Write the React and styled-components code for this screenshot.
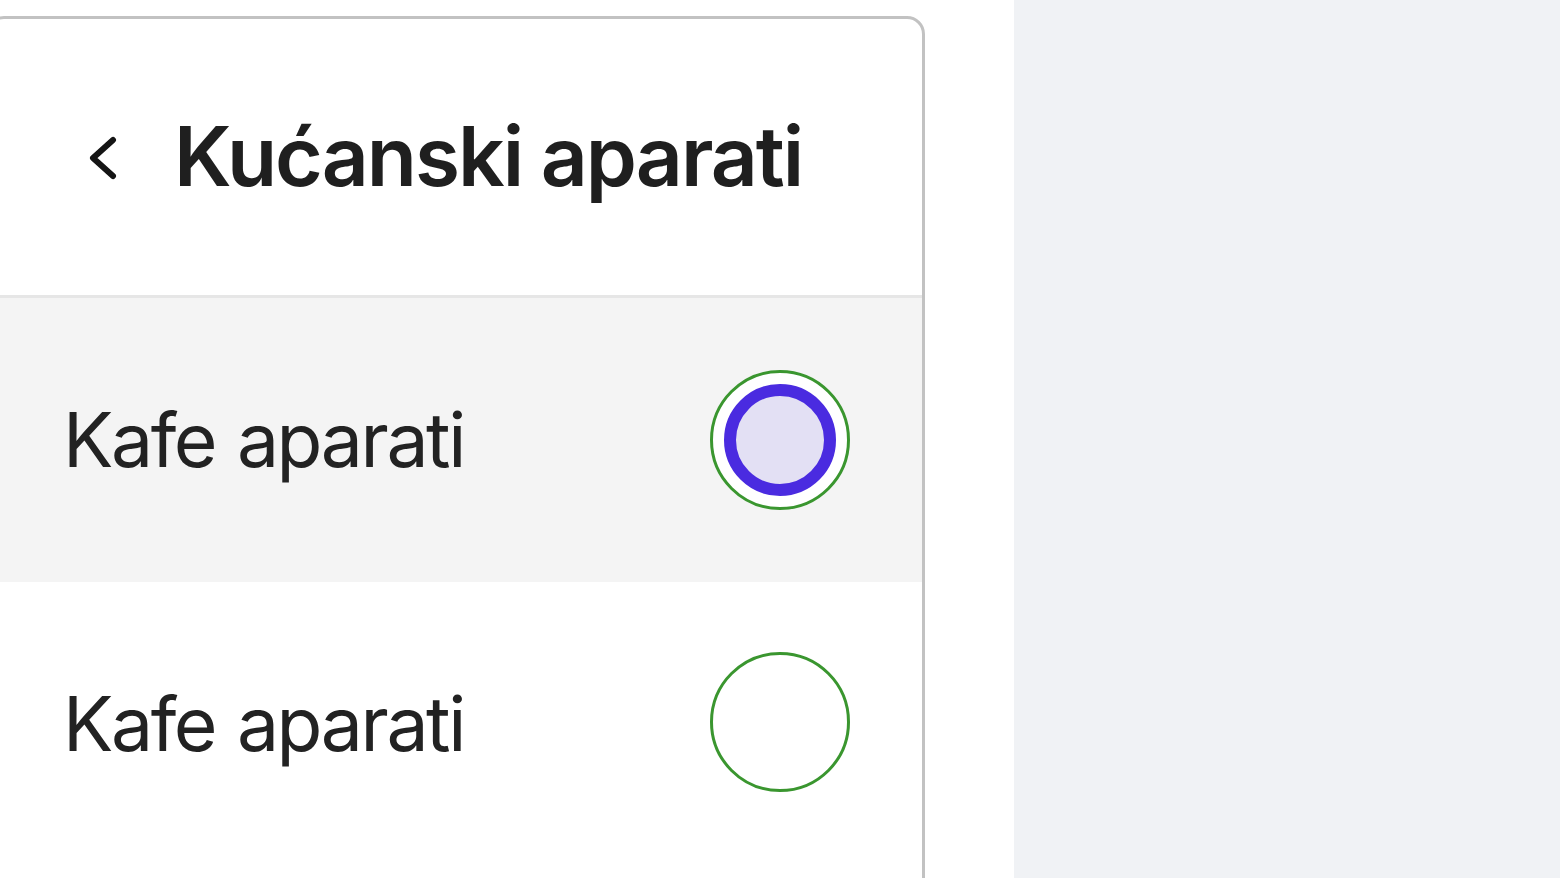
import React from "react";
import styled, { createGlobalStyle } from "styled-components";

const Global = createGlobalStyle`
  html, body { margin: 0; padding: 0; background: #ffffff; }
  body { font-family: Inter, "Noto Sans", "Liberation Sans", sans-serif; }
`;

const Page = styled.div`
  display: flex;
  width: 1560px;
  height: 878px;
  overflow: hidden;
  background: #ffffff;
`;

const LeftColumn = styled.div`
  width: 1014px;
  flex: none;
  padding-top: 16px;
  box-sizing: border-box;
`;

const SidePane = styled.div`
  flex: 1;
  background: #f0f2f5;
`;

const Panel = styled.div`
  margin-left: -14px;
  width: 939px;
  height: 900px;
  box-sizing: border-box;
  border: 3px solid #c2c2c2;
  border-radius: 18px 18px 0 0;
  background: #ffffff;
  overflow: hidden;
`;

const Header = styled.div`
  display: flex;
  align-items: center;
  height: 276px;
  padding-left: 99px;
  border-bottom: 3px solid #e6e6e6;
  gap: 56px;
`;

const BackButton = styled.button`
  display: flex;
  align-items: center;
  justify-content: center;
  padding: 0;
  border: 0;
  background: transparent;
  width: 30px;
  height: 44px;
  margin-top: 2px;
  cursor: pointer;
`;

const Title = styled.h1`
  margin: 0;
  font-family: Inter, "Noto Sans", sans-serif;
  font-weight: 600;
  font-size: 82px;
  letter-spacing: -2px;
  color: #1f1f1f;
  line-height: 1;
`;

const Row = styled.label`
  display: flex;
  align-items: center;
  justify-content: space-between;
  height: 284px;
  padding: 0 72px 0 74px;
  background: ${(p) => (p.$selected ? "#f4f4f4" : "#ffffff")};
  cursor: pointer;
`;

const RowText = styled.span`
  font-family: Inter, "Noto Sans", sans-serif;
  font-size: 75px;
  font-weight: 400;
  letter-spacing: -2.4px;
  word-spacing: 3px;
  color: #222222;
  line-height: 1;
  margin-top: -2px;
`;

const Radio = styled.span`
  display: flex;
  align-items: center;
  justify-content: center;
  width: 140px;
  height: 140px;
  box-sizing: border-box;
  border-radius: 50%;
  border: 3px solid #3a962f;
  background: #ffffff;
  margin-top: ${(p) => (p.$selected ? "0" : "-4px")};
`;

const RadioDot = styled.span`
  width: 112px;
  height: 112px;
  box-sizing: border-box;
  border-radius: 50%;
  border: 12px solid #4a2be0;
  background: #e3e0f4;
`;

const items = [
  { label: "Kafe aparati", selected: true },
  { label: "Kafe aparati", selected: false },
];

export default function App() {
  return (
    <>
      <Global />
      <Page>
        <LeftColumn>
          <Panel>
            <Header>
              <BackButton aria-label="Natrag">
                <svg width="30" height="44" viewBox="0 0 30 44" fill="none">
                  <path
                    d="M25 4 L5 22 L25 40"
                    stroke="#151515"
                    strokeWidth="6"
                    strokeLinecap="round"
                    strokeLinejoin="round"
                  />
                </svg>
              </BackButton>
              <Title>Kućanski aparati</Title>
            </Header>
            {items.map((it, i) => (
              <Row key={i} $selected={it.selected}>
                <RowText>{it.label}</RowText>
                <Radio $selected={it.selected}>
                  {it.selected && <RadioDot />}
                </Radio>
              </Row>
            ))}
          </Panel>
        </LeftColumn>
        <SidePane />
      </Page>
    </>
  );
}
